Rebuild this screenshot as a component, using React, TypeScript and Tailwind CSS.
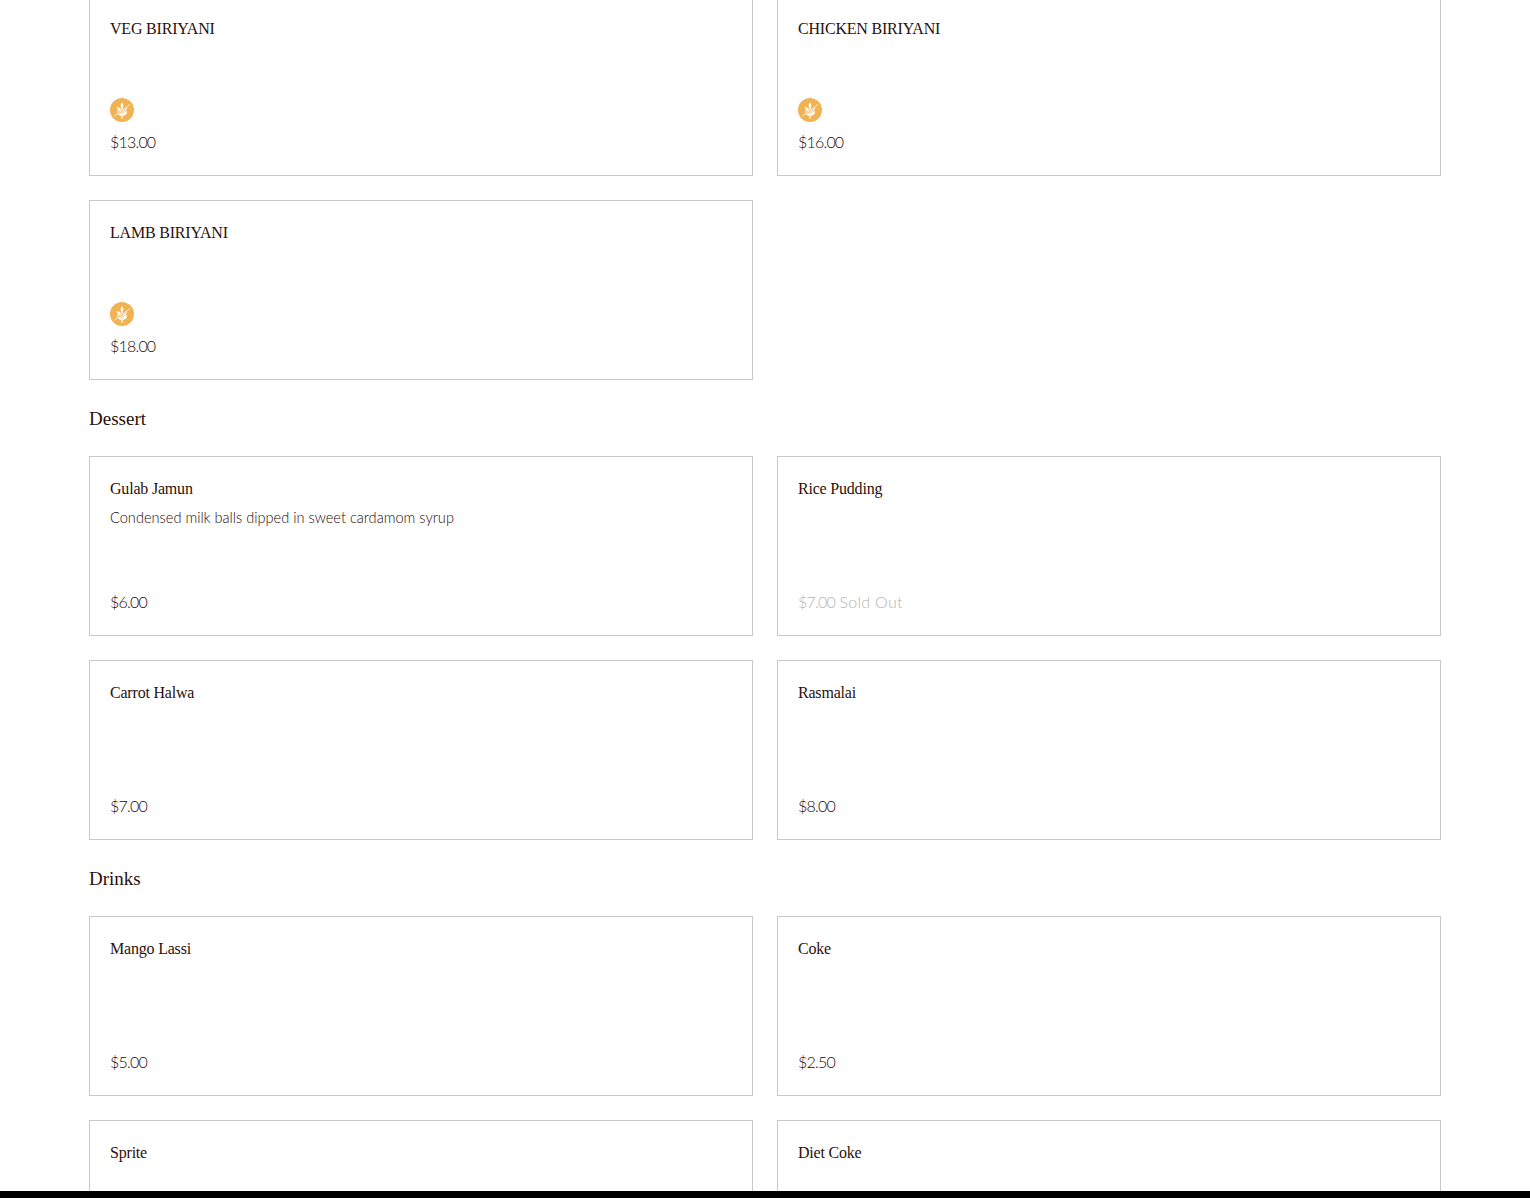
const serif = "font-['Liberation_Serif',serif]";

interface MenuItem {
  name: string;
  description?: string;
  price?: string;
  glutenFree?: boolean;
  soldOut?: boolean;
}

const biriyani: MenuItem[] = [
  { name: "VEG BIRIYANI", price: "$13.00", glutenFree: true },
  { name: "CHICKEN BIRIYANI", price: "$16.00", glutenFree: true },
  { name: "LAMB BIRIYANI", price: "$18.00", glutenFree: true },
];

const dessert: MenuItem[] = [
  {
    name: "Gulab Jamun",
    description: "Condensed milk balls dipped in sweet cardamom syrup",
    price: "$6.00",
  },
  { name: "Rice Pudding", price: "$7.00", soldOut: true },
  { name: "Carrot Halwa", price: "$7.00" },
  { name: "Rasmalai", price: "$8.00" },
];

const drinks: MenuItem[] = [
  { name: "Mango Lassi", price: "$5.00" },
  { name: "Coke", price: "$2.50" },
  { name: "Sprite" },
  { name: "Diet Coke" },
];

const GlutenFreeIcon = () => (
  <span className="flex h-6 w-6 items-center justify-center rounded-full bg-[#f0b252]">
    <svg viewBox="0 0 24 24" className="h-6 w-6" fill="none" stroke="#ffffff" strokeLinecap="round">
      <path d="M12 9v11" strokeWidth="1.3" />
      <path d="M12 9.500c-1.400-1.200-1.400-3.200 0-4.800 1.400 1.600 1.400 3.600 0 4.800z" fill="#ffffff" strokeWidth="0.5" />
      <path d="M11.300 13.500c-2.600 0-4-1.500-4.200-4 2.700 0 4.200 1.400 4.200 4z" fill="#ffffff" strokeWidth="0.5" />
      <path d="M12.700 13.500c2.600 0 4-1.500 4.200-4-2.700 0-4.200 1.400-4.200 4z" fill="#ffffff" strokeWidth="0.5" />
      <path d="M11.300 17.500c-2.600 0-4-1.500-4.200-4 2.700 0 4.200 1.400 4.200 4z" fill="#ffffff" strokeWidth="0.5" />
      <path d="M12.700 17.500c2.600 0 4-1.500 4.200-4-2.700 0-4.200 1.400-4.200 4z" fill="#ffffff" strokeWidth="0.5" />
      <path d="M4.500 18 20 6.500" stroke="#f0b252" strokeWidth="1.800" />
      <path d="M4.500 18 20 6.500" strokeWidth="0.8" />
    </svg>
  </span>
);

const MenuCard = ({ item }: { item: MenuItem }) => (
  <div className="flex h-[180px] flex-col border border-[#c9c9c9] bg-white px-5 pt-[21px] pb-[22px]">
    <h3 className={`${serif} text-[16px] leading-[22px] tracking-[-0.2px] text-[#2b0f0a]`}>{item.name}</h3>
    {item.description && (
      <p className="mt-[8px] text-[14.600px] leading-[20px] font-light text-[#1f0805]">{item.description}</p>
    )}
    <div className="mt-auto">
      {item.glutenFree && (
        <div className="mb-[9px]">
          <GlutenFreeIcon />
        </div>
      )}
      {item.price && (
        <p className={`text-[16px] leading-[22px] font-light ${item.soldOut ? "text-[#b4b4b4]" : "text-[#1f0805]"}`}>
          <span className="tracking-[-0.8px]">{item.price}</span>
          {item.soldOut && <span className="tracking-[0.3px]"> Sold Out</span>}
        </p>
      )}
    </div>
  </div>
);

const MenuGrid = ({ items }: { items: MenuItem[] }) => (
  <div className="grid grid-cols-2 gap-6">
    {items.map((item) => (
      <MenuCard key={item.name} item={item} />
    ))}
  </div>
);

const SectionTitle = ({ children }: { children: string }) => (
  <h2 className={`${serif} pt-[25px] pb-[23px] text-[19px] leading-[28px] text-[#2b0f0a]`}>{children}</h2>
);

export default function App() {
  return (
    <div className="flex h-[1198px] flex-col overflow-hidden bg-white font-['Lato',sans-serif]">
      <div className="min-h-0 flex-1 overflow-hidden">
        <div className="-mt-1 px-[89px]">
          <MenuGrid items={biriyani} />
          <SectionTitle>Dessert</SectionTitle>
          <MenuGrid items={dessert} />
          <SectionTitle>Drinks</SectionTitle>
          <MenuGrid items={drinks} />
        </div>
      </div>
      <div className="h-[7px] bg-black" />
    </div>
  );
}
